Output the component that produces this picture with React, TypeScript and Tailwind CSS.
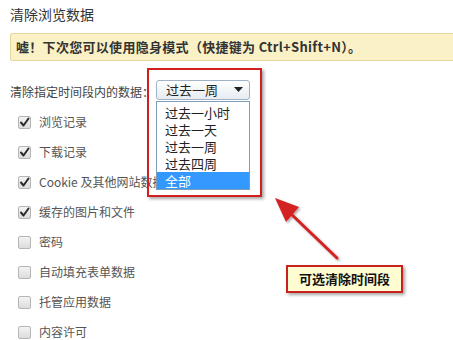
import React from 'react'

const font = { fontFamily: '"Noto Sans CJK SC", "Microsoft YaHei", sans-serif' }

type Item = { label: string; checked: boolean }

const items: Item[] = [
  { label: '浏览记录', checked: true },
  { label: '下载记录', checked: true },
  { label: 'Cookie 及其他网站数据', checked: true },
  { label: '缓存的图片和文件', checked: true },
  { label: '密码', checked: false },
  { label: '自动填充表单数据', checked: false },
  { label: '托管应用数据', checked: false },
  { label: '内容许可', checked: false },
]

const ranges = ['过去一小时', '过去一天', '过去一周', '过去四周', '全部']

function Checkbox({ checked }: { checked: boolean }) {
  return (
    <div className='w-[13px] h-[13px] rounded-[2px] border border-[#b5b5b5] bg-gradient-to-b from-[#f4f4f4] to-[#dcdcdc] flex items-center justify-center'>
      {checked && (
        <svg width='11' height='11' viewBox='0 0 11 11'>
          <path d='M2 5.5 L4.5 8.5 L9.5 1.5' fill='none' stroke='#2b2b2b' strokeWidth='2' strokeLinecap='round' strokeLinejoin='round' />
        </svg>
      )}
    </div>
  )
}

export default function App() {
  return (
    <div className='relative w-[453px] h-[340px] overflow-hidden bg-white' style={font}>
      <div className='pl-[10px] pt-[6px] text-[14px] leading-[16px] text-[#333]'>清除浏览数据</div>

      <div className='mt-[11px] ml-[10px] w-[460px] h-[28px] bg-[#fbf1c6] border border-[#e6d79f] rounded-[2px] flex items-center pl-[5px] text-[13px] tracking-[0.3px] font-bold text-[#333]'>
        嘘！下次您可以使用隐身模式（快捷键为 Ctrl+Shift+N）。
      </div>

      <div className='mt-[19px] h-[20px] flex items-center'>
        <div className='pl-[10px] w-[156px] text-[12px] text-[#444] pt-[3px]'>清除指定时间段内的数据：</div>
        <div className='w-[94px] h-[20px] border border-[#9fb2c6] rounded-[3px] bg-gradient-to-b from-white to-[#e6ecf2] flex items-center justify-between pl-[9px] pr-[6px] text-[13px] leading-[18px] text-[#222]'>
          <span>过去一周</span>
          <svg width='9' height='6' viewBox='0 0 9 6'>
            <path d='M0 0 L9 0 L4.5 5 Z' fill='#222' />
          </svg>
        </div>
      </div>

      <div className='mt-[7px] flex flex-col'>
        {items.map((it) => (
          <div key={it.label} className='h-[30px] flex items-center pl-[18px] gap-[8px]'>
            <Checkbox checked={it.checked} />
            <span className='text-[12px] text-[#555]'>{it.label}</span>
          </div>
        ))}
      </div>

      {/* dropdown list */}
      <div className='absolute left-[156px] top-[101px] w-[94px] h-[89px] bg-white border border-[#7f9db9] pt-[2px] flex flex-col'>
        {ranges.map((r) => (
          <div
            key={r}
            className={
              r === '全部'
                ? 'h-[17px] flex items-center pl-[8px] text-[13px] leading-[17px] bg-[#3399ff] text-white'
                : 'h-[17px] flex items-center pl-[8px] text-[13px] leading-[17px] text-[#222]'
            }
          >
            {r}
          </div>
        ))}
      </div>

      {/* red highlight frame */}
      <div className='absolute left-[147px] top-[68px] w-[115px] h-[129px] border-2 border-[#d11f1f] shadow-[2px_2px_3px_rgba(0,0,0,0.35)]' />

      {/* arrow */}
      <svg className='absolute left-0 top-0' width='453' height='340' viewBox='0 0 453 340'>
        <defs>
          <filter id='sh' x='-20%' y='-20%' width='140%' height='140%'>
            <feDropShadow dx='1.5' dy='1.5' stdDeviation='1' floodColor='#000' floodOpacity='0.35' />
          </filter>
        </defs>
        <g filter='url(#sh)'>
          <line x1='337' y1='258' x2='289' y2='212' stroke='#d42222' strokeWidth='3' strokeLinecap='round' />
          <path d='M275 198 L299 207 L286 222 Z' fill='#d42222' />
        </g>
      </svg>

      {/* callout */}
      <div className='absolute left-[286px] top-[265px] w-[117px] h-[28px] bg-[#fffcd2] border-2 border-[#c92020] shadow-[2px_2px_3px_rgba(0,0,0,0.35)] flex items-center justify-center text-[13px] font-bold text-[#111]'>
        可选清除时间段
      </div>
    </div>
  )
}
